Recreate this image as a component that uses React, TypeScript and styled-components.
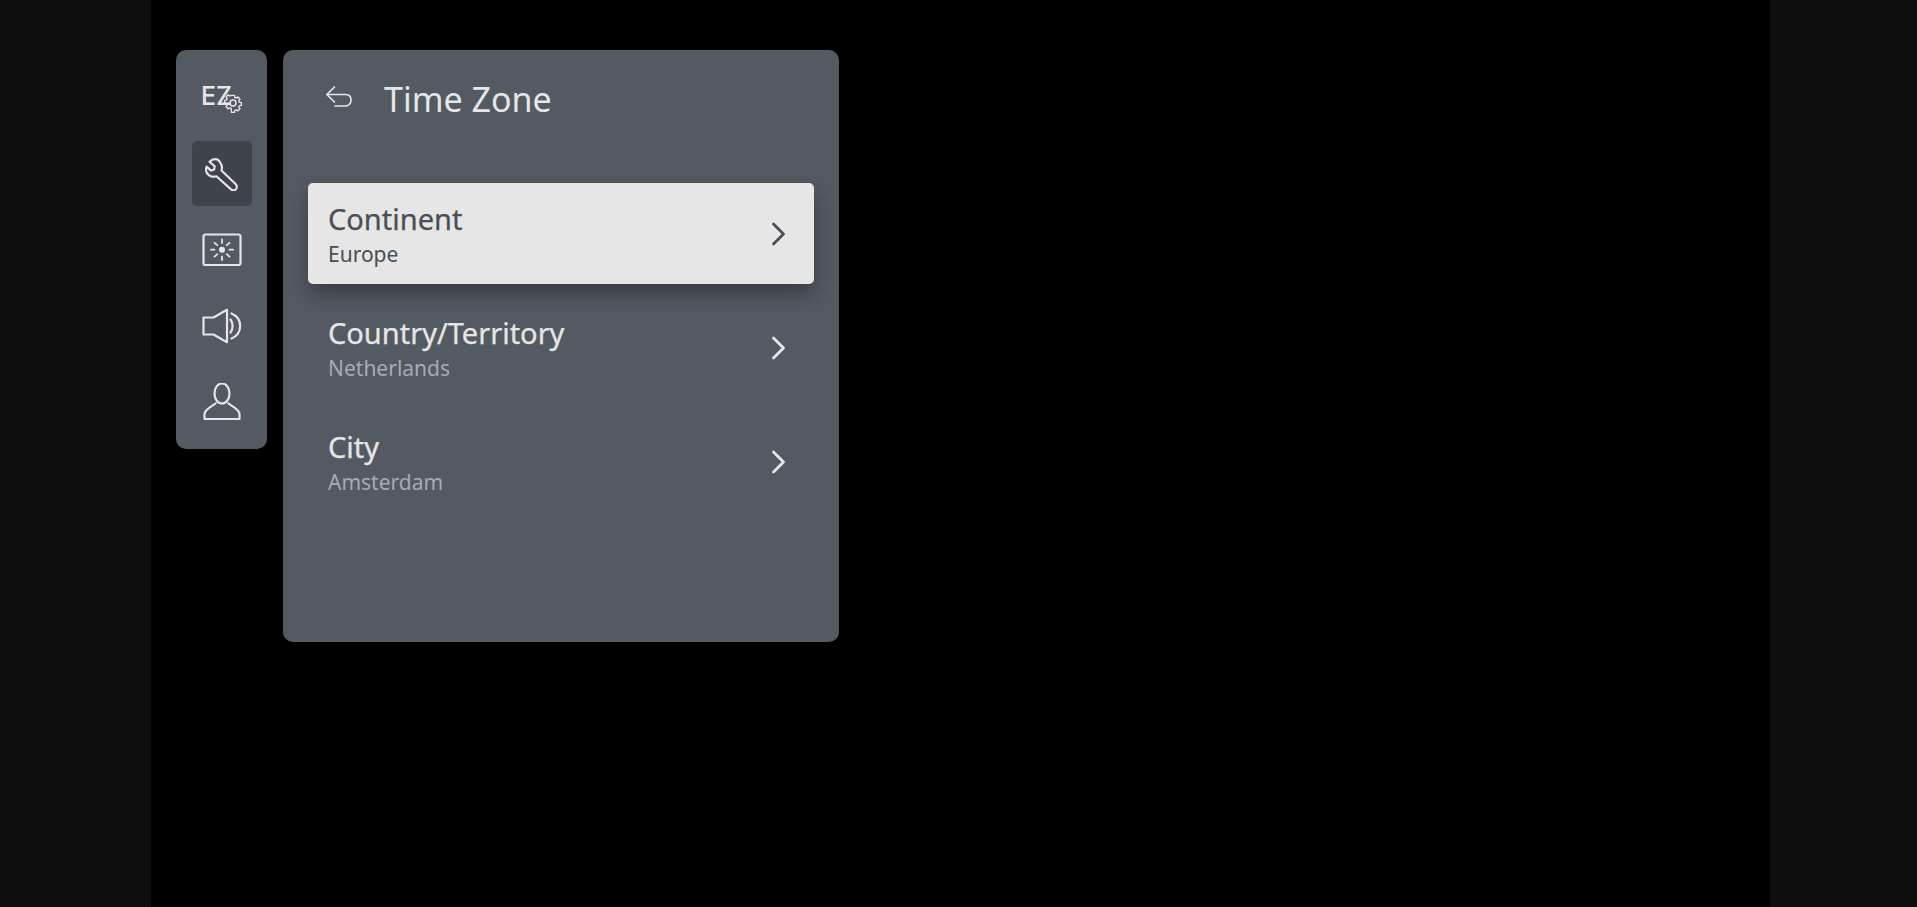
import React from "react";
import styled, { createGlobalStyle } from "styled-components";

const GlobalStyle = createGlobalStyle`
  html, body {
    margin: 0;
    padding: 0;
    background: #000;
  }
`;

const items = [
  { title: "Continent", value: "Europe", focused: true },
  { title: "Country/Territory", value: "Netherlands", focused: false },
  { title: "City", value: "Amsterdam", focused: false },
];

const EzIcon = () => (
  <EzWrap>
    <EzText>EZ</EzText>
    <EzGear viewBox="0 0 20 20" width="20" height="20" fill="none" stroke="#e6e6e6" strokeWidth="1.5">
      <path d="M8.4 2h3.2l.4 2.2 1.5.7 1.9-1.2 2.2 2.3-1.2 1.8.6 1.5 2.2.5v3.1l-2.2.5-.6 1.5 1.2 1.8-2.2 2.3-1.9-1.2-1.5.7-.4 2.2H8.4L8 16.2l-1.5-.7-1.9 1.2-2.2-2.3 1.2-1.8-.6-1.5-2.2-.5V7.5L3 7l.6-1.5-1.2-1.8 2.2-2.300 1.9 1.200L8 2z" transform="translate(0.9 0.6) scale(0.91)" />
      <circle cx="10" cy="10" r="3" />
    </EzGear>
  </EzWrap>
);

const WrenchIcon = () => (
  <svg viewBox="0 0 34 34" width="34" height="34" fill="none" stroke="#e6e6e6" strokeWidth="2.100" strokeLinejoin="round">
    <path d="M12.5 2.5c-3-.8-6 .2-8 2.300l5.200 4.400-.5 3.300-3.200 1.100L1.600 9.600c-1.200 3.200-.3 6.500 2.200 8.500 2.300 1.800 5 2 7.600 1.100l14.600 13.200c1.500 1.200 3.700 1.100 5-.3 1.300-1.500 1.100-3.700-.4-5L16.500 13.600c.9-2.900.4-5.900-1.400-8.300-.7-1.100-1.600-2.200-2.600-2.800z" />
  </svg>
);

const PictureIcon = () => (
  <svg viewBox="0 0 40 34" width="40" height="34" fill="none" stroke="#e6e6e6" strokeWidth="2.200">
    <rect x="1.500" y="1.500" width="37" height="30.500" rx="2" />
    <circle cx="20" cy="16.700" r="3" fill="#e6e6e6" stroke="none" />
    <path d="M20 6.500v3.500M20 23.500v3.500M9 16.700h3.500M27.500 16.700h3.500M12.500 9.800l2.700 2.400M24.800 21.200l2.700 2.400M27.500 9.800l-2.700 2.400M15.200 21.200l-2.700 2.400" strokeLinecap="round" strokeWidth="1.800" />
  </svg>
);

const SoundIcon = () => (
  <svg viewBox="0 0 40 36" width="40" height="36" fill="none" stroke="#e6e6e6" strokeWidth="2.200">
    <path d="M1.500 9.500h10L25 1.800v32.400l-13.500-7.700h-10z" strokeLinejoin="round" />
    <path d="M28.500 11.500c2.800 3.800 2.800 9.200 0 13M29.500 5.500c11.500 4.800 11.500 20 0 25" strokeLinecap="round" />
  </svg>
);

const PersonIcon = () => (
  <svg viewBox="0 0 38 38" width="38" height="38" fill="none" stroke="#e6e6e6" strokeWidth="2.200">
    <ellipse cx="19" cy="10.500" rx="7.500" ry="10" />
    <path d="M13.200 19.500c-1 2.800-11.200 5.600-11.700 11.500v5h35v-5c-.5-5.900-10.700-8.700-11.700-11.500" strokeLinejoin="round" />
  </svg>
);

const Chevron = ({ color }: { color: string }) => (
  <svg viewBox="0 0 16 24" width="16" height="24" fill="none" stroke={color} strokeWidth="2.800" strokeLinecap="round" strokeLinejoin="round">
    <path d="M2.500 2l10 10-10 10" />
  </svg>
);

const BackIcon = () => (
  <svg viewBox="0 0 28 24" width="28" height="24" fill="none" stroke="#e6e6e6" strokeWidth="1.700" strokeLinecap="round" strokeLinejoin="round">
    <path d="M9.500 2L1.800 9.500l7.700 7.500M2 9.500h18.500c3.300 0 5.500 2.200 5.500 5.500s-2.200 6-5.500 6H10" />
  </svg>
);

export default function App() {
  return (
    <>
      <GlobalStyle />
      <Screen>
        <Band $width={151} />
        <Stage>
          <Sidebar>
            <SideTile><EzIcon /></SideTile>
            <SideTile $active><WrenchIcon /></SideTile>
            <SideTile><PictureIcon /></SideTile>
            <SideTile><SoundIcon /></SideTile>
            <SideTile><PersonIcon /></SideTile>
          </Sidebar>
          <Panel>
            <Header>
              <BackSlot><BackIcon /></BackSlot>
              <Title>Time Zone</Title>
            </Header>
            <List>
              {items.map(item => (
                <Row key={item.title} $focused={item.focused}>
                  <RowText>
                    <RowTitle>{item.title}</RowTitle>
                    <RowValue $focused={item.focused}>{item.value}</RowValue>
                  </RowText>
                  <Chevron color={item.focused ? "#4a4e55" : "#e6e6e6"} />
                </Row>
              ))}
            </List>
          </Panel>
        </Stage>
        <Band $width={147} />
      </Screen>
    </>
  );
}

// Styles

const Screen = styled.div`
  display: flex;
  width: 1917px;
  height: 907px;
  overflow: hidden;
  background: #000;
  font-family: "Noto Sans", "Open Sans", sans-serif;
`;

const Band = styled.div<{ $width: number }>`
  flex: 0 0 ${p => p.$width}px;
  background: #0e0e0e;
`;

const Stage = styled.div`
  flex: 1;
  display: flex;
  align-items: flex-start;
  gap: 16px;
  padding: 50px 0 0 25px;
`;

const Sidebar = styled.nav`
  width: 91px;
  height: 399px;
  box-sizing: border-box;
  padding: 15px 15px 0 16px;
  display: flex;
  flex-direction: column;
  gap: 11px;
  background: #545a62;
  border-radius: 10px;
`;

const SideTile = styled.div<{ $active?: boolean }>`
  height: 65px;
  display: flex;
  align-items: center;
  justify-content: center;
  border-radius: 5px;
  background: ${p => (p.$active ? "#3f444b" : "transparent")};
`;

const EzWrap = styled.div`
  position: relative;
  width: 42px;
  height: 34px;
`;

const EzText = styled.span`
  position: absolute;
  left: 0;
  top: -2px;
  font-family: Inter, "Noto Sans", sans-serif;
  font-size: 25px;
  font-weight: 500;
  line-height: 34px;
  color: #e6e6e6;
`;

const EzGear = styled.svg`
  position: absolute;
  right: 0;
  bottom: 2px;
`;

const Panel = styled.section`
  width: 556px;
  height: 592px;
  box-sizing: border-box;
  padding: 0 25px;
  background: #545a62;
  border-radius: 10px;
`;

const Header = styled.header`
  height: 133px;
  box-sizing: border-box;
  padding: 26px 0 0 0;
  display: flex;
  align-items: flex-start;
`;

const BackSlot = styled.div`
  width: 76px;
  padding: 9px 0 0 17px;
  box-sizing: border-box;
`;

const Title = styled.h1`
  margin: 0;
  font-size: 34px;
  line-height: 46px;
  font-weight: 400;
  color: #e6e6e6;
`;

const List = styled.div`
  display: flex;
  flex-direction: column;
  gap: 13px;
`;

const Row = styled.div<{ $focused: boolean }>`
  height: 101px;
  box-sizing: border-box;
  padding: 0 27px 0 20px;
  display: flex;
  align-items: center;
  justify-content: space-between;
  border-radius: 5px;
  color: ${p => (p.$focused ? "#4a4e55" : "#e6e6e6")};
  background: ${p => (p.$focused ? "#e6e6e6" : "transparent")};
  box-shadow: ${p => (p.$focused ? "0 10px 20px rgba(0, 0, 0, 0.32)" : "none")};
`;

const RowText = styled.div`
  display: flex;
  flex-direction: column;
`;

const RowTitle = styled.div`
  font-size: 29px;
  -webkit-text-stroke: 0.25px currentColor;
  line-height: 38px;
  margin-bottom: 2px;
`;

const RowValue = styled.div<{ $focused: boolean }>`
  font-size: 21px;
  line-height: 28px;
  color: ${p => (p.$focused ? "#4a4e55" : "#a5abb3")};
`;
